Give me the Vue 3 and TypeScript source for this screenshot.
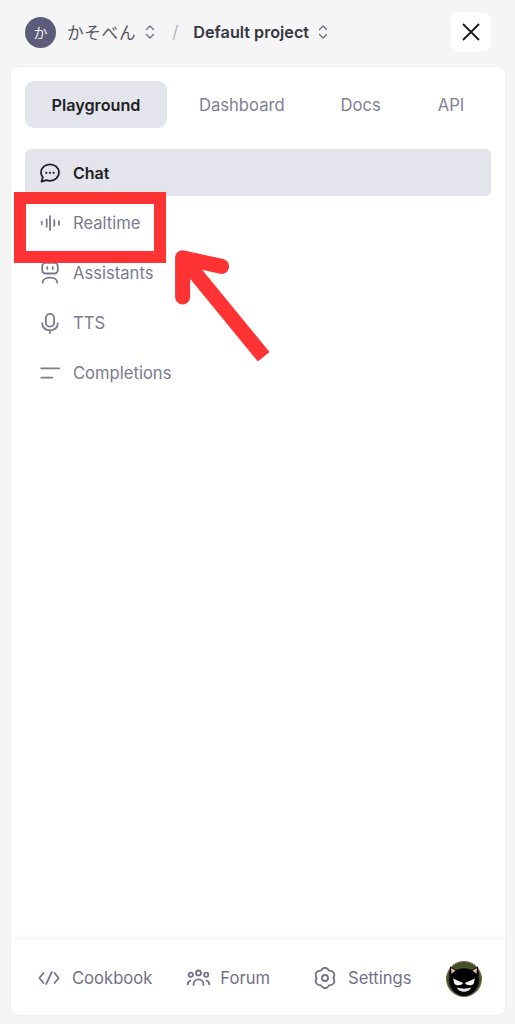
<script setup lang="ts">
const tabs = ['Playground', 'Dashboard', 'Docs', 'API']

// six soft lobes round the settings cog
function cogPath(): string {
  const at = (deg: number, r: number) => {
    const a = (deg * Math.PI) / 180
    return `${(12 + r * Math.sin(a)).toFixed(2)} ${(12 - r * Math.cos(a)).toFixed(2)}`
  }
  let d = `M${at(-30, 9.2)}`
  for (let i = 0; i < 6; i++) {
    d += ` Q${at(i * 60, 14.4)} ${at(i * 60 + 30, 9.2)}`
  }
  return d + 'Z'
}
const cog = cogPath()
</script>

<template>
  <div class="page">
    <header class="top">
      <div class="crumbs">
        <span class="org-avatar">か</span>
        <span class="org-name">かそべん</span>
        <svg class="updown" viewBox="0 0 12 18" fill="none">
          <path d="M2.500 6.500 6 3l3.500 3.500M2.500 11.500 6 15l3.500-3.500" />
        </svg>
        <span class="slash">/</span>
        <span class="project">Default project</span>
        <svg class="updown" viewBox="0 0 12 18" fill="none">
          <path d="M2.500 6.500 6 3l3.500 3.500M2.500 11.500 6 15l3.500-3.500" />
        </svg>
      </div>
      <button class="close" aria-label="Close">
        <svg viewBox="0 0 20 20" width="20" height="20" fill="none">
          <path d="M2 2l16 16M18 2 2 18" />
        </svg>
      </button>
    </header>

    <main class="card">
      <nav class="tabs">
        <a v-for="(tab, i) in tabs" :key="tab" :class="['tab', 'tab-' + i, { active: i === 0 }]">{{ tab }}</a>
      </nav>

      <ul class="menu">
        <li class="item current">
          <svg class="icon" viewBox="0 0 24 24" fill="none">
            <path d="M12 2.500c5.400 0 9.800 3.900 9.800 9s-4.400 9-9.800 9c-1.400 0-2.700-.3-3.900-.8l-5.300 1.700 1.300-4.700a8.500 8.500 0 0 1-1.900-5.200c0-5.100 4.400-9 9.800-9Z" />
            <circle class="dot" cx="8" cy="11.800" r="1.200" />
            <circle class="dot" cx="12" cy="11.800" r="1.200" />
            <circle class="dot" cx="16" cy="11.800" r="1.200" />
          </svg>
          <span>Chat</span>
        </li>
        <li class="item">
          <svg class="icon" viewBox="0 0 24 24" fill="none">
            <path d="M3 10.500v3M8.400 8v8M12 4.500v15M16.700 9v6M21.800 10v4" />
          </svg>
          <span>Realtime</span>
        </li>
        <li class="item">
          <svg class="icon" viewBox="0 0 24 24" fill="none">
            <rect x="3.500" y="1" width="17" height="11.500" rx="3.500" />
            <path d="M9 5.500v2M15 5.500v2" />
            <path d="M4 22.500c0-3.500 3.500-5.500 8-5.500s8 2 8 5.500" />
          </svg>
          <span>Assistants</span>
        </li>
        <li class="item">
          <svg class="icon" viewBox="0 0 24 24" fill="none">
            <rect x="7.500" y="2" width="9" height="14" rx="4.500" />
            <path d="M3.500 12.500c0 4.500 3.800 7.500 8.500 7.500s8.500-3 8.500-7.500M12 20v3" />
          </svg>
          <span>TTS</span>
        </li>
        <li class="item">
          <svg class="icon" viewBox="0 0 24 24" fill="none">
            <path d="M2.500 7h19.500M2.500 17h12" />
          </svg>
          <span>Completions</span>
        </li>
      </ul>

      <footer class="foot">
        <a class="link cookbook">
          <svg class="icon" viewBox="0 0 24 24" fill="none">
            <path d="M6 6.500 1.500 12 6 17.500M18 6.500l4.500 5.500-4.500 5.500M15 5.500 9 18.500" />
          </svg>
          <span>Cookbook</span>
        </a>
        <a class="link forum">
          <svg class="icon wide" viewBox="0 0 26 24" fill="none">
            <circle cx="13" cy="6.500" r="2.700" />
            <circle cx="4.600" cy="8.500" r="2.300" />
            <circle cx="21.400" cy="8.500" r="2.300" />
            <path d="M7.500 19.500c0-3.600 2.300-6 5.500-6s5.500 2.400 5.500 6M1.200 19c.2-2.200 1.300-3.600 3-4.300M24.800 19c-.2-2.200-1.300-3.600-3-4.300" />
          </svg>
          <span>Forum</span>
        </a>
        <a class="link settings">
          <svg class="icon" viewBox="0 0 24 24" fill="none">
            <path :d="cog" />
            <circle cx="12" cy="12" r="3.300" />
          </svg>
          <span>Settings</span>
        </a>
        <svg class="me" viewBox="0 0 36 36">
          <circle cx="18" cy="18" r="17.500" fill="#43502a" stroke="#7c6a45" />
          <path d="M4 5.500l6.500 3.500a17 17 0 0 1 15 0l6.500-3.500 1 13c0 8.500-6.500 16.500-15 16.500S3 27 3 18.500Z" fill="#040404" />
          <path d="M5 7l4.500 2.500-4 3.500ZM31 7l-4.500 2.500 4 3.500Z" fill="#e9b3b0" />
          <path d="M7 17.500l10 4.500c-1 2.500-6.500 3-8.500 1ZM29 17.500l-10 4.500c1 2.500 6.500 3 8.500 1Z" fill="#f4f4f4" />
          <path d="M11 26.500c4 1.500 10 1.500 14 0-1 3-4 4.200-7 4.200s-6-1.200-7-4.200Z" fill="#e8e8e8" />
        </svg>
      </footer>
    </main>

    <div class="mark-box"></div>
    <svg class="mark-arrow" viewBox="0 0 110 130" width="110" height="130" fill="none">
      <path class="head" d="M9.600 64V24.800l39 8.600" />
      <path class="shaft" d="M9.600 24.800l81.100 99" />
    </svg>
  </div>
</template>

<style scoped>
.page {
  position: relative;
  display: flex;
  flex-direction: column;
  width: 515px;
  height: 1024px;
  overflow: hidden;
  background: #f5f5f5;
  font-family: Inter, "Noto Sans CJK JP", sans-serif;
  font-size: 16.6px;
  color: #70707f;
}

.top {
  flex: none;
  height: 66px;
  padding: 12px 24px 0 25px;
  box-sizing: border-box;
  display: flex;
  justify-content: space-between;
  align-items: flex-start;
}

.crumbs {
  display: flex;
  align-items: center;
  height: 40px;
}

.org-avatar {
  width: 31px;
  height: 31px;
  border-radius: 50%;
  background: #5c5b79;
  color: #eeeef4;
  font-size: 14px;
  display: flex;
  align-items: center;
  justify-content: center;
  margin-right: 11px;
}

.org-name {
  font-size: 16.6px;
  letter-spacing: 0.7px;
  color: #55555f;
}

.updown {
  width: 12px;
  height: 18px;
  margin-left: 8px;
  stroke: #6e6e80;
  stroke-width: 1.300;
  stroke-linecap: round;
  stroke-linejoin: round;
}

.slash {
  margin: 0 15px 0 16px;
  color: #b4b4bc;
  font-size: 17px;
}

.project {
  font-size: 16.2px;
  font-weight: 600;
  color: #353740;
}

.close {
  width: 40px;
  height: 40px;
  padding: 0;
  border: 0;
  border-radius: 9px;
  background: #fff;
  display: flex;
  align-items: center;
  justify-content: center;
}

.close path {
  stroke: #202123;
  stroke-width: 2;
}

.card {
  flex: 1;
  min-height: 0;
  margin: 0 9px 8px 10px;
  padding: 14px 14px 0;
  background: #fff;
  border: 1px solid #f0f0f0;
  border-radius: 9px;
  display: flex;
  flex-direction: column;
}

.tabs {
  display: flex;
  align-items: center;
  height: 47px;
}

.tab {
  color: #7f7f93;
  font-weight: 400;
}

.tab.active {
  width: 142px;
  height: 47px;
  box-sizing: border-box;
  border-radius: 9px;
  background: #e3e4ec;
  color: #202123;
  font-size: 16.2px;
  font-weight: 600;
  display: flex;
  align-items: center;
  justify-content: center;
}

.tab-1 {
  margin-left: 32px;
}

.tab-2 {
  margin-left: 56px;
}

.tab-3 {
  margin-left: 57px;
}

.menu {
  list-style: none;
  margin: 21px 0 0;
  padding: 0;
  flex: 1;
  display: flex;
  flex-direction: column;
  gap: 3px;
}

.item {
  height: 47px;
  padding-left: 14px;
  border-radius: 6px;
  display: flex;
  align-items: center;
  gap: 12px;
  color: #7b7b90;
}

.item.current {
  background: #e3e4ec;
  color: #202123;
  font-size: 16px;
  font-weight: 600;
}

.icon {
  flex: none;
  width: 22px;
  height: 22px;
  stroke: currentColor;
  stroke-width: 2;
  stroke-linecap: round;
  stroke-linejoin: round;
}

.icon .dot {
  fill: currentColor;
  stroke: none;
}

.foot {
  flex: none;
  box-sizing: border-box;
  height: 77px;
  margin: 0 -14px;
  padding: 2px 0 0 27px;
  border-top: 1px solid #f4f4f4;
  box-shadow: 0 -3px 4px rgba(0, 0, 0, 0.015);
  display: flex;
  align-items: center;
  color: #72728a;
}

.link {
  display: flex;
  align-items: center;
  gap: 12px;
}

.forum {
  margin-left: 34px;
  gap: 9px;
}

.settings {
  margin-left: 44px;
  gap: 12px;
}

.wide {
  width: 25px;
}

.me {
  flex: none;
  width: 36px;
  height: 36px;
  margin: 1px 0 0 34px;
}

.mark-box {
  position: absolute;
  left: 14px;
  top: 192px;
  width: 152px;
  height: 71px;
  box-sizing: border-box;
  border: 12px solid #ff3333;
}

.mark-arrow {
  position: absolute;
  left: 173px;
  top: 233px;
}

.mark-arrow path {
  stroke: #ff3333;
  stroke-width: 15;
  stroke-linejoin: round;
}

.mark-arrow .head {
  stroke-linecap: round;
}
</style>
